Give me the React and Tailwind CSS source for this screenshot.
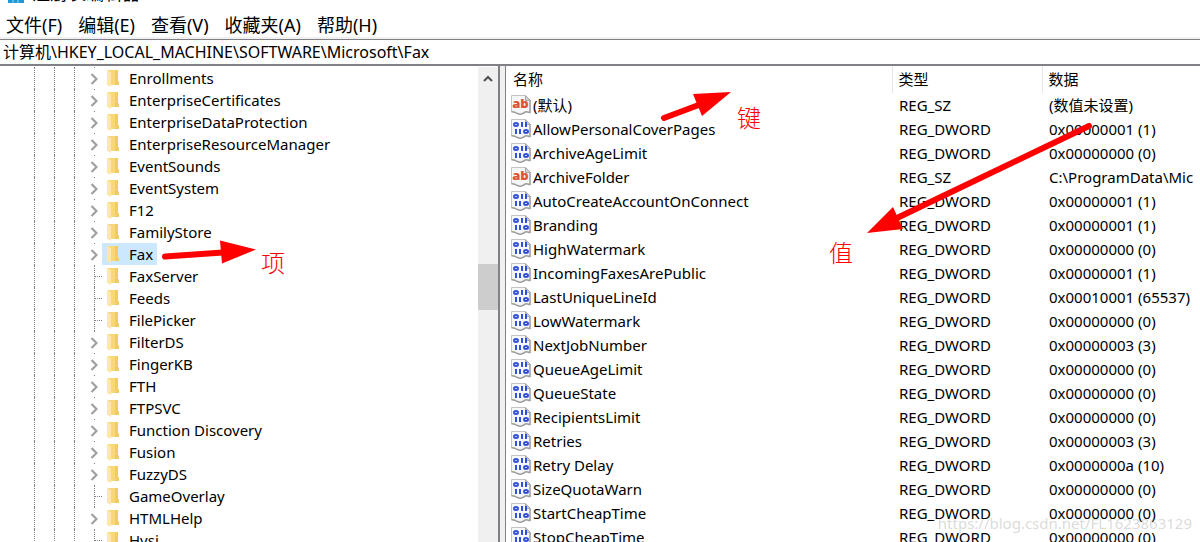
const MENU = ["文件(F)", "编辑(E)", "查看(V)", "收藏夹(A)", "帮助(H)"];

const KEYS = [
  { name: "Enrollments", expandable: true },
  { name: "EnterpriseCertificates", expandable: true },
  { name: "EnterpriseDataProtection", expandable: true },
  { name: "EnterpriseResourceManager", expandable: true },
  { name: "EventSounds", expandable: true },
  { name: "EventSystem", expandable: true },
  { name: "F12", expandable: true },
  { name: "FamilyStore", expandable: true },
  { name: "Fax", expandable: true, selected: true },
  { name: "FaxServer" },
  { name: "Feeds" },
  { name: "FilePicker" },
  { name: "FilterDS", expandable: true },
  { name: "FingerKB", expandable: true },
  { name: "FTH", expandable: true },
  { name: "FTPSVC", expandable: true },
  { name: "Function Discovery", expandable: true },
  { name: "Fusion", expandable: true },
  { name: "FuzzyDS", expandable: true },
  { name: "GameOverlay" },
  { name: "HTMLHelp", expandable: true },
  { name: "Hvsi" },
];

const VALUES = [
  ["(默认)", "REG_SZ", "(数值未设置)"],
  ["AllowPersonalCoverPages", "REG_DWORD", "0x00000001 (1)"],
  ["ArchiveAgeLimit", "REG_DWORD", "0x00000000 (0)"],
  ["ArchiveFolder", "REG_SZ", "C:\\ProgramData\\Mic"],
  ["AutoCreateAccountOnConnect", "REG_DWORD", "0x00000001 (1)"],
  ["Branding", "REG_DWORD", "0x00000001 (1)"],
  ["HighWatermark", "REG_DWORD", "0x00000000 (0)"],
  ["IncomingFaxesArePublic", "REG_DWORD", "0x00000001 (1)"],
  ["LastUniqueLineId", "REG_DWORD", "0x00010001 (65537)"],
  ["LowWatermark", "REG_DWORD", "0x00000000 (0)"],
  ["NextJobNumber", "REG_DWORD", "0x00000003 (3)"],
  ["QueueAgeLimit", "REG_DWORD", "0x00000000 (0)"],
  ["QueueState", "REG_DWORD", "0x00000000 (0)"],
  ["RecipientsLimit", "REG_DWORD", "0x00000000 (0)"],
  ["Retries", "REG_DWORD", "0x00000003 (3)"],
  ["Retry Delay", "REG_DWORD", "0x0000000a (10)"],
  ["SizeQuotaWarn", "REG_DWORD", "0x00000000 (0)"],
  ["StartCheapTime", "REG_DWORD", "0x00000000 (0)"],
  ["StopCheapTime", "REG_DWORD", "0x00000000 (0)"],
];

function FolderIcon() {
  return (
    <svg width="12" height="18" viewBox="0 0 12 18" className="shrink-0" aria-hidden="true">
      <path d="M1 1h10v11l1 1v3H3z" fill="#f7d776" />
      <path d="M8 1h3v11l1 1v3H8z" fill="#f1cb66" />
      <path d="M0 1l4 2v15l-4-2z" fill="#ffe8a6" />
    </svg>
  );
}

function ValueIcon({ type }) {
  return (
    <svg width="20" height="20" viewBox="0 0 20 20" className="shrink-0" aria-hidden="true">
      <path d="M.5.5h14l5 5v12.5c-1.500 0-2-1-4-1-2.500 0-3 2.500-6 2.500-4 0-4-2.500-9-2.500z" fill="#f6f7fa" />
      <path d="M.5 17V.5h14" fill="none" stroke="#c4c4c4" />
      <path d="M19 5v12.500c-1 0-2-.7-3.500-.7-2.500 0-3 2.400-6 2.400-4 0-4-2.400-9-2.400" fill="none" stroke="#9c9c9c" strokeWidth="1.500" />
      <path d="M14.500.5v5h5z" fill="#d0d0d0" stroke="#a9a9a9" />
      {type === "REG_SZ" ? (
        <text x="9.500" y="13" textAnchor="middle" fontSize="13" fontWeight="800" fontFamily="Open Sans, sans-serif" fill="#dc5433">
          ab
        </text>
      ) : (
        <g fill="none" stroke="#2f50d8" strokeWidth="2">
          <ellipse cx="5" cy="5.500" rx="2" ry="1.500" />
          <ellipse cx="15" cy="12.500" rx="2" ry="1.500" />
          <path d="M11 3v5M15 3v5M5 10v5M9 10v5" />
        </g>
      )}
    </svg>
  );
}

function TreeRow({ item }) {
  return (
    <li className="flex h-[22px]">
      <span className="ml-[34px] w-5 border-l border-dotted border-[#808080]" />
      <span className="w-5 border-l border-dotted border-[#808080]" />
      <span className="w-4 border-l border-dotted border-[#808080]" />
      {item.expandable ? (
        <button className="w-3 text-[#a0a0a0]" aria-label={"Expand " + item.name}>
          <svg width="8" height="22" viewBox="0 0 8 22" fill="none" stroke="currentColor" strokeWidth="2.200">
            <path d="M1.500 7l5 5-5 5" />
            <path d="M4 0h1v1h-1z" fill="#808080" stroke="none" />
          </svg>
        </button>
      ) : (
        <span className="ml-1 flex w-2 items-center border-l border-dotted border-[#808080]">
          <span className="w-full border-t border-dotted border-[#808080]" />
        </span>
      )}
      <button
        className={
          item.selected
            ? "flex items-center gap-[10px] bg-[#cce8ff] pl-[5px] pr-1"
            : "flex items-center gap-[10px] pl-[5px] pr-1"
        }
      >
        <FolderIcon />
        {item.name}
      </button>
    </li>
  );
}

function Annotations() {
  return (
    <>
      <svg className="pointer-events-none absolute left-0 top-0" width="1200" height="542" viewBox="0 0 1200 542" fill="#ff0000" stroke="#ff0000" strokeLinecap="round" aria-hidden="true">
        <path d="M165 256.500l58-4" strokeWidth="6" />
        <path d="M220 240.500l36 9-34 14z" stroke="none" />
        <path d="M664 118l40-15" strokeWidth="6" />
        <path d="M693 94l38-2-29 24z" stroke="none" />
        <path d="M1089 126L897 218" strokeWidth="6" />
        <path d="M893 207l10 22-36 4z" stroke="none" />
      </svg>
      <span className="absolute left-[261px] top-[247px] text-2xl font-light text-[#ff0000]">项</span>
      <span className="absolute left-[737px] top-[102px] text-2xl font-light text-[#ff0000]">键</span>
      <span className="absolute left-[829px] top-[237px] text-2xl font-light text-[#ff0000]">值</span>
    </>
  );
}

export default function App() {
  return (
    <div className="relative flex h-screen flex-col overflow-hidden bg-white font-['Noto_Sans','Noto_Sans_CJK_SC',sans-serif] text-[15px] text-black">
      <header className="flex h-[3px] shrink-0 items-end gap-2 overflow-hidden pl-2">
        <svg width="16" height="16" viewBox="0 0 16 16" className="shrink-0" aria-hidden="true">
          <path d="M0 0h16v16H0z" fill="#1f9ad6" />
          <path d="M5 0v16M10 0v16M0 5h16M0 10h16" stroke="#8fdcf7" />
        </svg>
        <h1 className="text-lg leading-5">注册表编辑器</h1>
      </header>
      <nav className="flex h-[34px] shrink-0 items-center gap-4 pl-[6px] pt-[10px] pb-[1px] text-lg">
        {MENU.map((label) => (
          <button key={label}>{label}</button>
        ))}
      </nav>
      <div className="shrink-0 border-b-2 border-[#828087] bg-[#f0f0f0] pt-[2px]">
        <input
          aria-label="Address"
          className="block h-[25px] w-full border-t border-[#828087] bg-white pb-[2px] pl-[3px] text-base outline-none"
          defaultValue={"计算机\\HKEY_LOCAL_MACHINE\\SOFTWARE\\Microsoft\\Fax"}
        />
      </div>
      <main className="flex min-h-0 flex-1">
        <aside className="flex w-[500px] shrink-0 overflow-hidden border-r-2 border-[#828087]">
          <ul className="flex-1 pt-[1px]">
            {KEYS.map((item) => (
              <TreeRow key={item.name} item={item} />
            ))}
          </ul>
          <div className="mt-[1px] flex w-5 flex-col items-center bg-[#f0f0f0]">
            <button className="flex h-[22px] items-center text-[#505050]" aria-label="Scroll up">
              <svg width="10" height="7" viewBox="0 0 10 7" fill="none" stroke="currentColor" strokeWidth="2">
                <path d="M1 6l4-4 4 4" />
              </svg>
            </button>
            <div className="mt-[175px] h-[46px] w-full bg-[#cdcdcd]" />
          </div>
        </aside>
        <div className="w-[5px] shrink-0 bg-[#f0f0f0]" />
        <section className="min-w-0 flex-1 overflow-hidden border-l border-[#828087] bg-white">
          <table className="w-full table-fixed text-left">
            <thead>
              <tr className="h-[27px]">
                <th className="w-[386px] border-r border-[#e5e5e5] p-0 pl-[7px] font-normal">名称</th>
                <th className="w-[150px] border-r border-[#e5e5e5] p-0 pl-[6px] font-normal">类型</th>
                <th className="p-0 pl-[6px] font-normal">数据</th>
              </tr>
            </thead>
            <tbody>
              {VALUES.map(([name, type, data]) => (
                <tr key={name} className="h-6 whitespace-nowrap">
                  <td className="p-0 pl-[5px]">
                    <div className="flex items-center gap-[2px]">
                      <ValueIcon type={type} />
                      {name}
                    </div>
                  </td>
                  <td className="p-0 pl-[7px]">{type}</td>
                  <td className="p-0 pl-[7px]">{data}</td>
                </tr>
              ))}
            </tbody>
          </table>
        </section>
      </main>
      <Annotations />
      <span className="absolute bottom-2 right-2 text-[15px] text-[#808080]/30">https://blog.csdn.net/FL1623863129</span>
    </div>
  );
}
